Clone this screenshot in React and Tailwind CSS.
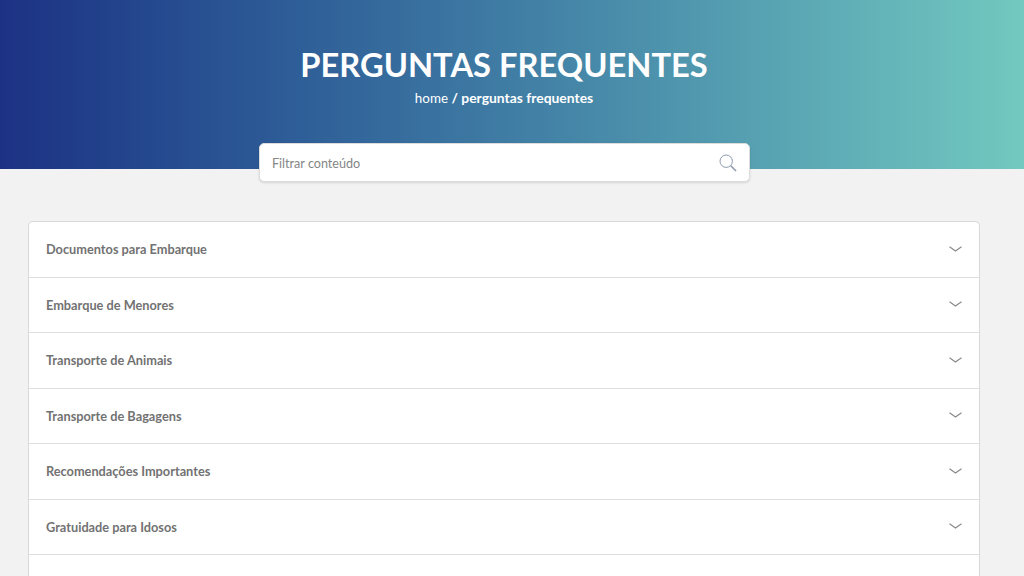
const items = [
  "Documentos para Embarque",
  "Embarque de Menores",
  "Transporte de Animais",
  "Transporte de Bagagens",
  "Recomendações Importantes",
  "Gratuidade para Idosos",
];

function Chevron() {
  return (
    <svg width="13" height="6" viewBox="0 0 13 6" fill="none" stroke="#8a8a8a" strokeWidth="1.2" className="mb-px block">
      <path d="M0.5 0.7 L6.5 5 L12.5 0.7" />
    </svg>
  );
}

export default function App() {
  return (
    <div className="h-[576px] overflow-hidden bg-[#f2f2f2] font-['Lato',sans-serif]">
      <header className="relative h-[169px] bg-gradient-to-r from-[#1d3184] to-[#72c9bf] text-center text-white">
        <div className="pr-4 pt-[43px]">
          <h1 className="text-[32.7px] leading-[44px] font-bold">PERGUNTAS FREQUENTES</h1>
          <p className="text-[13.4px] leading-[22px]">
            home <span className="text-[13.9px] font-bold">/ perguntas frequentes</span>
          </p>
        </div>
        <div className="absolute left-[259px] top-[143px] flex h-[39px] w-[491px] items-center justify-between rounded-[5px] border border-[#dcdcdc] bg-white pl-3 pr-[12px] shadow-sm">
          <span className="pt-[3px] text-[12.6px] text-[#858585]">Filtrar conteúdo</span>
          <svg width="18" height="18" viewBox="0 0 18 18" fill="none" stroke="#8d99ad" className="block">
            <circle cx="7.2" cy="7.2" r="6.2" strokeWidth="1" />
            <path d="M11.8 11.8 L17 17" strokeWidth="1.6" />
          </svg>
        </div>
      </header>
      <main className="px-[28px] pr-[44px] pt-[52px]">
        <div className="overflow-hidden rounded-t-[5px] border border-b-0 border-[#d9d9d9] bg-white">
          {items.map((t) => (
            <div key={t} className="flex h-[55.5px] items-center justify-between border-b border-[#dedede] pl-[17px] pr-[17px]">
              <span className="pt-px text-[12.75px] font-bold text-[#727272]">{t}</span>
              <Chevron />
            </div>
          ))}
          <div className="h-[55.5px]" />
        </div>
      </main>
    </div>
  );
}
